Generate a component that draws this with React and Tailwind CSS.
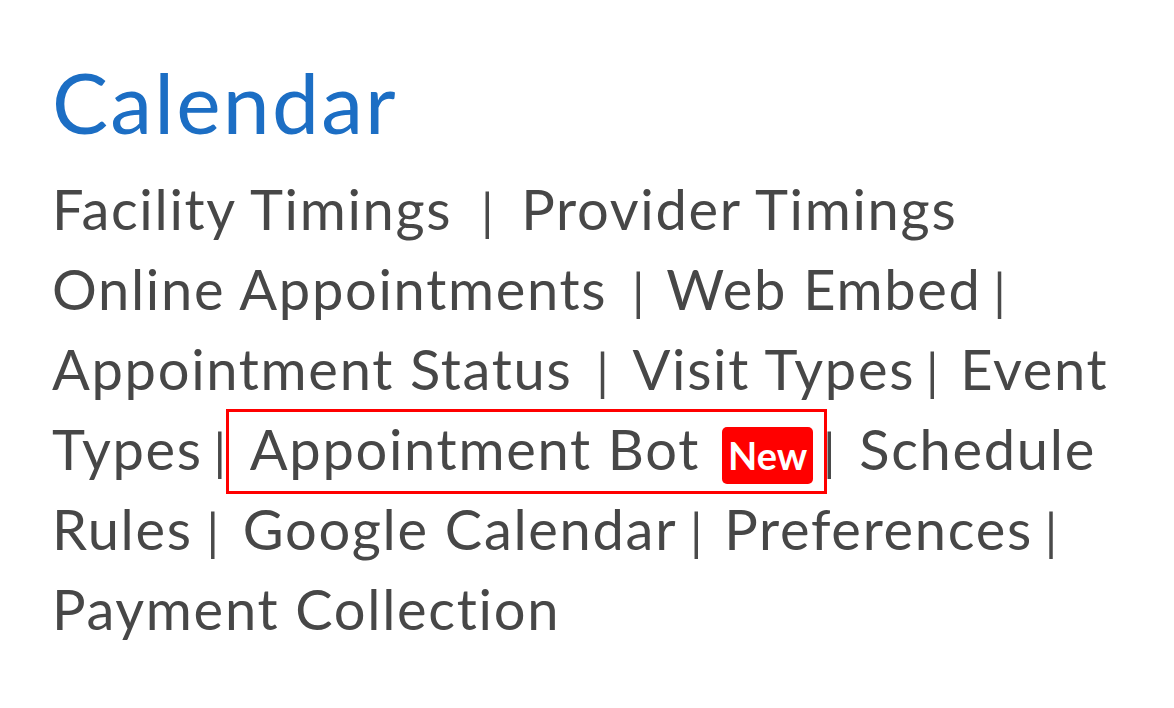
import React from "react";

const Pipe = ({ className = "" }) => (
  <span className={`inline-block w-[16px] text-center text-[50px] tracking-normal text-[#4a4a4a] ${className}`}>|</span>
);

export default function App() {
  return (
    <div className="min-h-[708px] w-[1174px] bg-white pl-[52px] pt-[60px] font-['Lato',sans-serif] text-[#474747]">
      <h1 className="text-[84px] leading-none tracking-[2.2px] text-[#1c6ec4]">Calendar</h1>

      <div className="mt-[25px] text-[56px] leading-[80px] tracking-[1.7px]">
        <div className="flex h-[80px] items-baseline">
          <span>Facility Timings</span>
          <Pipe className="ml-[27px] mr-[26px]" />
          <span>Provider Timings</span>
        </div>

        <div className="flex h-[80px] items-baseline">
          <span>Online Appointments</span>
          <Pipe className="ml-[23px] mr-[20px]" />
          <span>Web Embed</span>
          <Pipe className="ml-[10px]" />
        </div>

        <div className="flex h-[80px] items-baseline">
          <span>Appointment Status</span>
          <Pipe className="ml-[22px] mr-[22px]" />
          <span>Visit Types</span>
          <Pipe className="ml-[9px] mr-[20px]" />
          <span>Event</span>
        </div>

        <div className="flex h-[80px] items-baseline">
          <span>Types</span>
          <Pipe className="ml-[9px] mr-[-2px]" />
          <span className="flex items-baseline border-[3px] border-[#ff0000] pl-[21px] pr-[11px] pb-[5px] leading-[74px]">
            <span>Appointment Bot</span>
            <span className="ml-[22px] rounded-[5px] bg-[#ff0000] px-[6px] text-[38px] font-bold leading-[57px] tracking-normal text-white">
              New
            </span>
          </span>
          <Pipe className="ml-[-6px] mr-[22px]" />
          <span>Schedule</span>
        </div>

        <div className="flex h-[80px] items-baseline">
          <span>Rules</span>
          <Pipe className="ml-[12px] mr-[22px]" />
          <span>Google Calendar</span>
          <Pipe className="ml-[11px] mr-[20px]" />
          <span>Preferences</span>
          <Pipe className="ml-[10px]" />
        </div>

        <div className="flex h-[80px] items-baseline">
          <span>Payment Collection</span>
        </div>
      </div>
    </div>
  );
}
